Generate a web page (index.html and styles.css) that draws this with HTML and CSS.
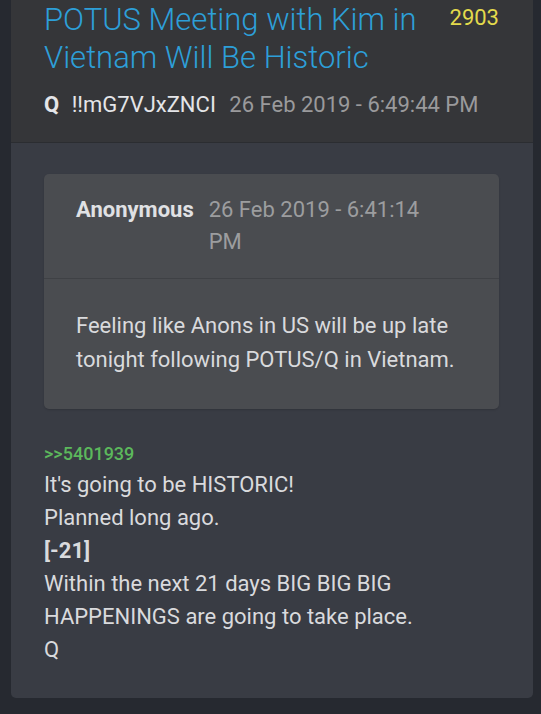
FILE: index.html
```html
<!DOCTYPE html>
<html lang="en">
<head>
    <meta charset="UTF-8">
    <meta name="viewport" content="width=device-width, initial-scale=1.0">
    <title>Q Post 2903</title>
    <link rel="stylesheet" href="styles.css">
</head>
<body>
    <div class="post">
        <div class="post-header">
            <div class="post-title-row">
                <h2 class="post-title">POTUS Meeting with Kim in Vietnam Will Be Historic</h2>
                <span class="post-number">2903</span>
            </div>
            <div class="post-meta">
                <span class="author">Q</span>
                <span class="trip">!!mG7VJxZNCI</span>
                <span class="date">26 Feb 2019 - 6:49:44 PM</span>
            </div>
        </div>
        <div class="post-body">
            <div class="quote">
                <div class="quote-header">
                    <span class="quote-author">Anonymous</span>
                    <span class="quote-date">26 Feb 2019 - 6:41:14 PM</span>
                </div>
                <div class="quote-text">
                    Feeling like Anons in US will be up late tonight following POTUS/Q in Vietnam.
                </div>
            </div>
            <div class="reply-link">&gt;&gt;5401939</div>
            <div class="post-text">
                It's going to be HISTORIC!<br>
                Planned long ago.<br>
                <strong>[-21]</strong><br>
                Within the next 21 days BIG BIG BIG HAPPENINGS are going to take place.<br>
                Q
            </div>
        </div>
    </div>
</body>
</html>
```

FILE: styles.css
```css
/* General */
body {
    margin: 0;
    padding: 0;
    background-color: #262930;
    font-family: Roboto, "Liberation Sans", sans-serif;
    color: #d9dadd;
}

/* Post card */
.post {
    width: 522px;
    margin: 0 8px 17px 11px;
    background-color: #393c44;
    border-radius: 0 0 5px 5px;
    overflow: hidden;
}

.post-header {
    background-color: #353639;
    padding: 1px 34px 21px 33px;
    border-bottom: 1px solid #2b2d31;
}

.post-title-row {
    display: flex;
    align-items: flex-start;
    justify-content: space-between;
    gap: 20px;
}

.post-title {
    margin: 0;
    font-size: 31px;
    font-weight: 300;
    line-height: 38px;
    color: #2d9fd8;
}

.post-number {
    font-size: 22px;
    line-height: 34px;
    color: #e3da4c;
}

.post-meta {
    margin-top: 11px;
    font-size: 22px;
    line-height: 33px;
}

.post-meta .author {
    font-weight: 700;
    color: #e4e5e8;
    margin-right: 7px;
}

.post-meta .trip {
    color: #e4e5e8;
    margin-right: 8px;
}

.post-meta .date {
    color: #9a9a9c;
}

/* Body */
.post-body {
    padding: 31px 34px 32px 33px;
}

.quote {
    background-color: #4a4c50;
    border-radius: 5px;
    box-shadow: 0 1px 2px rgba(0, 0, 0, 0.15);
}

.quote-header {
    display: flex;
    gap: 15px;
    padding: 20px 60px 20px 32px;
    border-bottom: 1px solid #3f4145;
    font-size: 22px;
    line-height: 32px;
}

.quote-author {
    font-weight: 700;
    color: #e0e1e4;
    white-space: nowrap;
}

.quote-date {
    color: #9c9d9f;
}

.quote-text {
    padding: 30px 32px 32px 32px;
    font-size: 22px;
    line-height: 34px;
    color: #d9dadd;
}

.reply-link {
    margin-top: 30px;
    font-size: 18px;
    font-weight: 500;
    line-height: 29px;
    color: #5cb85c;
}

.post-text {
    font-size: 22px;
    line-height: 33px;
}

.post-text strong {
    font-weight: 700;
}
```
